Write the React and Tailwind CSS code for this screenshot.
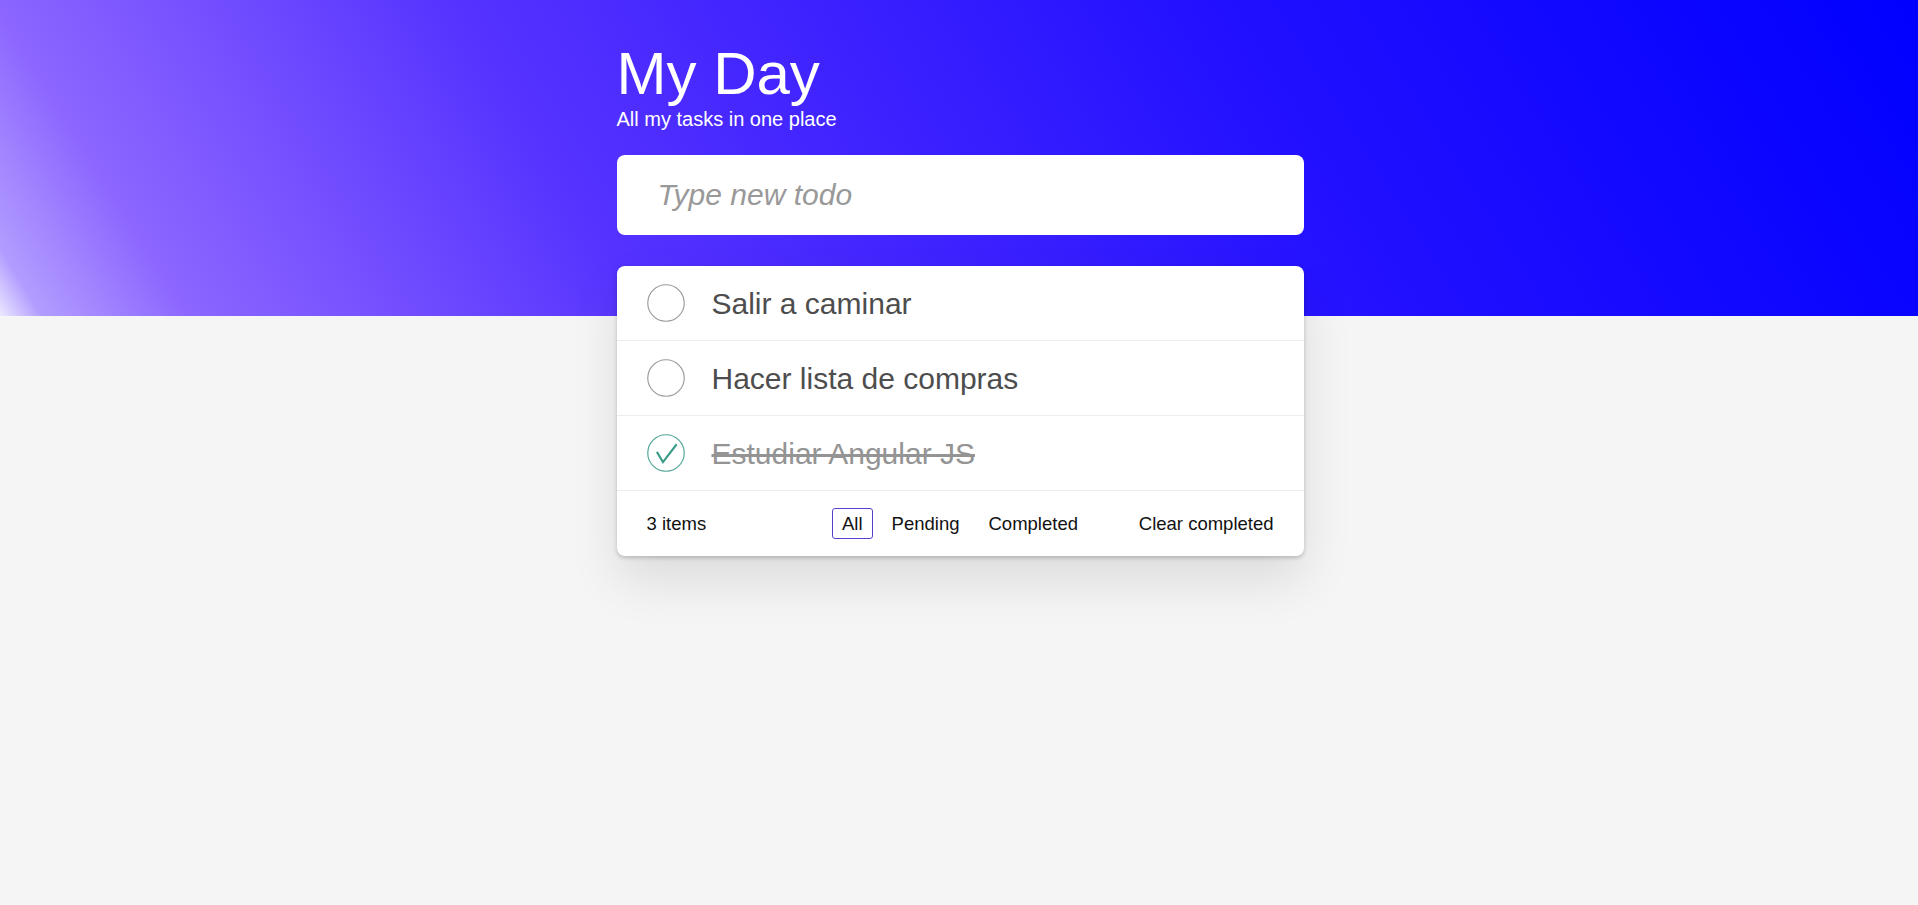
import React, { useState } from "react";

const initialTodos = [
  { id: 1, title: "Salir a caminar", completed: false },
  { id: 2, title: "Hacer lista de compras", completed: false },
  { id: 3, title: "Estudiar Angular JS", completed: true },
];

const filters = ["All", "Pending", "Completed"];

function CheckCircle({ checked }) {
  return (
    <svg viewBox="0 0 100 100" className="w-[38px] h-[38px] shrink-0">
      <circle
        cx="50"
        cy="50"
        r="48"
        fill="none"
        stroke={checked ? "#4fa595" : "#9a9a9a"}
        strokeWidth="3"
      />
      {checked && (
        <polyline
          points="26,47 42,74 78,27"
          fill="none"
          stroke="#3d9c87"
          strokeWidth="5.5"
        />
      )}
    </svg>
  );
}

export default function App() {
  const [todos, setTodos] = useState(initialTodos);
  const [filter, setFilter] = useState("All");

  const toggle = (id) =>
    setTodos(todos.map((t) => (t.id === id ? { ...t, completed: !t.completed } : t)));

  const visible = todos.filter((t) => {
    if (filter === "Pending") return !t.completed;
    if (filter === "Completed") return t.completed;
    return true;
  });

  return (
    <div className="min-h-screen bg-[#f5f5f5] bg-[linear-gradient(58deg,#ece8ff_0%,#b29cff_2%,#8c66ff_9%,#5532ff_31%,#2210ff_66%,#0000ff_100%)] bg-no-repeat bg-size-[100%_316px] font-['Liberation_Sans',Arial,sans-serif]">
      <div className="w-[687px] mx-auto pt-[44px] translate-x-[1px]">
        <h1 className="text-[60px] leading-none text-white">My Day</h1>
        <p className="text-[20px] leading-[30px] text-white">All my tasks in one place</p>

        <input
          type="text"
          placeholder="Type new todo"
          className="mt-[21px] w-full h-[80px] rounded-lg bg-white px-[41px] text-[30px] italic text-[#4d4d4d] placeholder:text-[#999999] outline-none"
        />

        <div className="mt-[31px] bg-white rounded-lg shadow-[0_2px_4px_0_rgba(0,0,0,0.2),0_25px_50px_0_rgba(0,0,0,0.1)]">
          <ul>
            {visible.map((todo) => (
              <li
                key={todo.id}
                className="h-[75px] border-b border-[#ededed] flex items-center pl-[30px] gap-[27px]">
                <button onClick={() => toggle(todo.id)} className="cursor-pointer">
                  <CheckCircle checked={todo.completed} />
                </button>
                <span
                  className={`text-[30px] ${
                    todo.completed ? "text-[#949494] line-through" : "text-[#4d4d4d]"
                  }`}>
                  {todo.title}
                </span>
              </li>
            ))}
          </ul>

          <div className="h-[65px] grid grid-cols-[1fr_auto_1fr] items-center px-[30px] text-[18.5px] text-[#111111]">
            <span>{todos.length} items</span>
            <div className="flex items-center gap-[9px]">
              {filters.map((f) => (
                <button
                  key={f}
                  onClick={() => setFilter(f)}
                  className={`h-[31px] px-[9px] rounded-[3px] border flex items-center ${
                    filter === f ? "border-[#5a3ecf]" : "border-transparent"
                  }`}>
                  {f}
                </button>
              ))}
            </div>
            <button
              onClick={() => setTodos(todos.filter((t) => !t.completed))}
              className="justify-self-end">
              Clear completed
            </button>
          </div>
        </div>
      </div>
    </div>
  );
}
